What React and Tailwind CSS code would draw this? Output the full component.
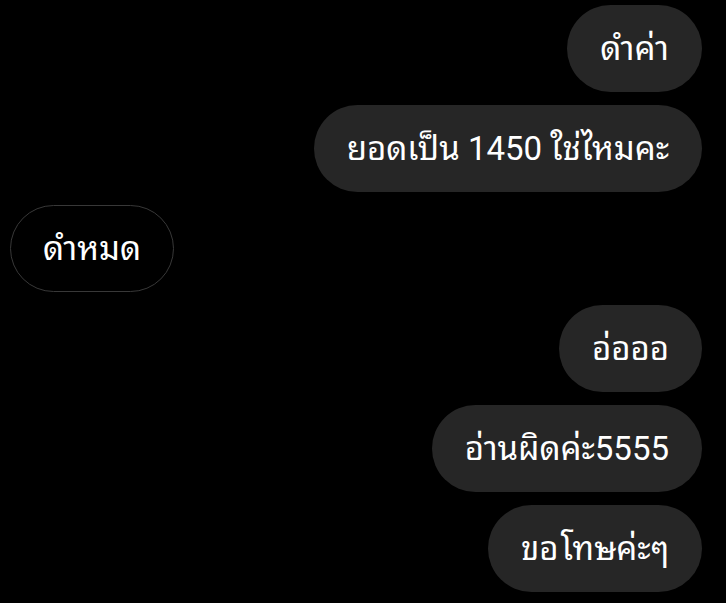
import React from 'react';

const messages = [
  { text: 'ดำค่า', mine: true },
  { text: 'ยอดเป็น 1450 ใช่ไหมคะ', mine: true },
  { text: 'ดำหมด', mine: false },
  { text: 'อ่อออ', mine: true },
  { text: 'อ่านผิดค่ะ5555', mine: true },
  { text: 'ขอ โทษค่ะๆ', mine: true, tight: true },
];

function Bubble({ text, mine, tight }) {
  return (
    <div className={mine ? 'flex justify-end' : 'flex justify-start'}>
      <div
        className={
          mine
            ? 'h-[87px] flex items-center px-[33px] rounded-full bg-[#262626] text-white text-[33px] whitespace-nowrap'
            : 'h-[87px] flex items-center px-[32px] rounded-full border border-[#383838] text-white text-[33px] whitespace-nowrap'
        }
      >
        <span className={tight ? '[word-spacing:-6px]' : ''}>{text}</span>
      </div>
    </div>
  );
}

export default function App() {
  return (
    <div className="w-[726px] h-[603px] bg-black overflow-hidden flex flex-col gap-[13px] pt-[5px] pl-[10px] pr-[24px] font-['Roboto','Noto_Sans_Thai_Looped',sans-serif]">
      {messages.map((m, i) => (
        <Bubble key={i} text={m.text} mine={m.mine} tight={m.tight} />
      ))}
    </div>
  );
}
